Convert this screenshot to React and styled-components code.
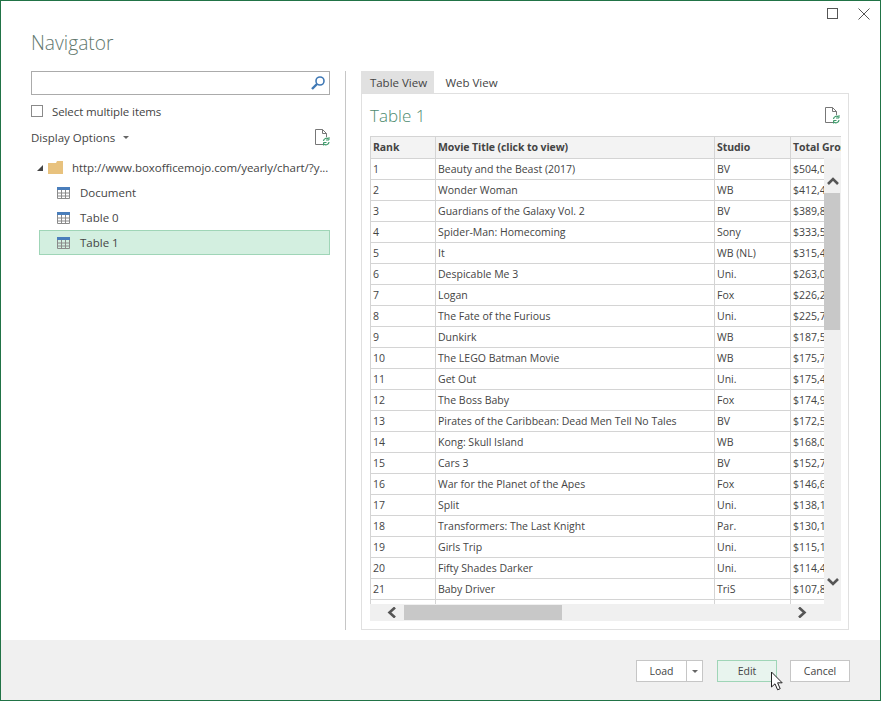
import React from "react";
import styled, { createGlobalStyle } from "styled-components";

const GlobalStyle = createGlobalStyle`
  html, body { margin: 0; padding: 0; background: #fff; }
  body { font-family: "Open Sans", "Noto Sans", sans-serif; color: #444; }
`;

const Window = styled.div`
  position: relative;
  box-sizing: border-box;
  width: 881px;
  height: 701px;
  border: 1px solid #217346;
  background: #fff;
  display: flex;
  flex-direction: column;
  overflow: hidden;
`;

const TitleBar = styled.div`
  height: 27px;
  display: flex;
  justify-content: flex-end;
  align-items: flex-start;
  padding: 7px 10px 0 0;
  gap: 20px;
  flex: none;
  box-sizing: border-box;
`;

const Heading = styled.h1`
  margin: 0;
  height: 43px;
  padding: 1px 0 0 30px;
  box-sizing: border-box;
  font-size: 19.2px;
  line-height: 28px;
  font-weight: 300;
  color: #62786e;
  flex: none;
`;

const Main = styled.div`
  flex: 1;
  display: flex;
  padding: 0 31px 10px 30px;
  min-height: 0;
`;

const LeftPane = styled.div`
  width: 299px;
  flex: none;
`;

const Divider = styled.div`
  width: 1px;
  background: #c6c6c6;
  margin: 0 15px 0 15px;
  flex: none;
`;

const RightPane = styled.div`
  flex: 1;
  display: flex;
  flex-direction: column;
  min-width: 0;
`;

const SearchBox = styled.div`
  box-sizing: border-box;
  height: 24px;
  border: 1px solid #ababab;
  display: flex;
  align-items: center;
  justify-content: flex-end;
  padding-right: 3px;
`;

const CheckRow = styled.label`
  display: flex;
  align-items: center;
  gap: 9px;
  height: 22px;
  margin-top: 5px;
  font-size: 11.5px;
  letter-spacing: -0.1px;
`;

const CheckBox = styled.span`
  box-sizing: border-box;
  width: 12px;
  height: 12px;
  border: 1px solid #8a8a8a;
  background: #fff;
`;

const OptionsRow = styled.div`
  display: flex;
  align-items: center;
  justify-content: space-between;
  height: 22px;
  margin-top: 4px;
  font-size: 11.5px;
`;

const OptionsLabel = styled.span`
  display: flex;
  align-items: center;
  gap: 8px;
`;

const Caret = styled.span`
  width: 0;
  height: 0;
  border-left: 3px solid transparent;
  border-right: 3px solid transparent;
  border-top: 3px solid #666;
`;

const Tree = styled.div`
  margin-top: 7px;
  display: flex;
  flex-direction: column;
`;

const RootNode = styled.div`
  height: 25px;
  display: flex;
  align-items: center;
  padding-left: 6px;
  font-size: 11.5px;
  letter-spacing: -0.05px;
  white-space: nowrap;
`;

const Arrow = styled.span`
  width: 0;
  height: 0;
  border-left: 6px solid transparent;
  border-bottom: 6px solid #444;
  margin-right: 5px;
  flex: none;
`;

const NodeLabel = styled.span`
  margin-left: 9px;
`;

const TreeItem = styled.div`
  box-sizing: border-box;
  height: 25px;
  margin-left: 8px;
  display: flex;
  align-items: center;
  gap: 10px;
  padding-left: ${(p) => (p.$selected ? "17px" : "18px")};
  font-size: 11.5px;
  background: ${(p) => (p.$selected ? "#d3efe0" : "transparent")};
  border: ${(p) => (p.$selected ? "1px solid #9fd5b7" : "none")};
`;

const Tabs = styled.div`
  display: flex;
  height: 22px;
  flex: none;
`;

const Tab = styled.div`
  box-sizing: border-box;
  width: ${(p) => p.$width}px;
  height: 22px;
  padding-left: ${(p) => (p.$active ? "2px" : "0")};
  display: flex;
  align-items: center;
  justify-content: center;
  font-size: 11.5px;
  background: ${(p) => (p.$active ? "#e1e1e1" : "transparent")};
`;

const Panel = styled.div`
  flex: 1;
  box-sizing: border-box;
  border: 1px solid #e0e0e0;
  padding: 0 7px 8px 8px;
  display: flex;
  flex-direction: column;
  min-height: 0;
`;

const PanelHead = styled.div`
  height: 42px;
  display: flex;
  align-items: center;
  justify-content: space-between;
  padding-right: 1px;
  flex: none;
`;

const PanelTitle = styled.div`
  font-size: 17px;
  font-weight: 300;
  color: #4d8a6e;
`;

const TableArea = styled.div`
  position: relative;
  flex: 1;
  overflow: hidden;
`;

const Grid = styled.table`
  border-collapse: collapse;
  table-layout: fixed;
  width: 471px;
  font-size: 10.5px;
  color: #444;
  th, td {
    box-sizing: border-box;
    border: 1px solid #d4d4d4;
    padding: 0 0 0 2px;
    text-align: left;
    white-space: nowrap;
    overflow: hidden;
  }
  td { height: 21px; }
  th {
    height: 22px;
    padding-bottom: 2px;
    background: #f3f3f3;
    font-weight: 700;
    letter-spacing: -0.08px;
  }
`;

const VScroll = styled.div`
  position: absolute;
  top: 22px;
  right: 0;
  width: 17px;
  bottom: 0;
  background: #f0f0f0;
`;

const VThumb = styled.div`
  position: absolute;
  top: 35px;
  left: 0;
  width: 16px;
  height: 137px;
  background: #c8c8c8;
`;

const HScroll = styled.div`
  position: absolute;
  left: 0;
  right: 0;
  bottom: 0;
  height: 17px;
  background: #f0f0f0;
`;

const HThumb = styled.div`
  position: absolute;
  left: 34px;
  top: 1px;
  height: 15px;
  width: 158px;
  background: #c8c8c8;
`;

const Chevron = styled.svg`
  position: absolute;
  left: ${(p) => p.$x}px;
  top: ${(p) => p.$y}px;
`;

const Footer = styled.div`
  height: 60px;
  flex: none;
  background: #f0f0f0;
  display: flex;
  justify-content: flex-end;
  align-items: flex-start;
  padding: 20px 30px 0 0;
  box-sizing: border-box;
  gap: 13px;
`;

const Button = styled.div`
  box-sizing: border-box;
  width: ${(p) => p.$width}px;
  height: 22px;
  border: 1px solid ${(p) => (p.$primary ? "#9fd5b7" : "#c6c6c6")};
  background: ${(p) => (p.$primary ? "#e8f4ee" : "#fff")};
  display: flex;
  align-items: center;
  justify-content: center;
  font-size: 10.5px;
`;

const SplitButton = styled.div`
  display: flex;
  margin-right: 1px;
`;

const SplitCaret = styled(Button)`
  margin-left: -1px;
`;

const Pointer = styled.svg`
  position: absolute;
  left: 769px;
  top: 670px;
`;

const RefreshDoc = () => (
  <svg width="16" height="17" viewBox="0 0 16 17">
    <path d="M9.5 15.5H1.5V.5H8.5L12.5 4.5V8" fill="none" stroke="#777" />
    <path d="M8.5.5V4.5H12.5" fill="none" stroke="#777" />
    <path d="M9.5 12a3 3 0 0 1 5-2M15 13a3 3 0 0 1-5 2" fill="none" stroke="#3f9a6b" strokeWidth="1.2" />
    <path d="M15 8v3h-3M9.5 16.5v-3h3" fill="none" stroke="#3f9a6b" />
  </svg>
);

const TableIcon = () => (
  <svg width="13" height="12" viewBox="0 0 13 12">
    <rect x="0" y="0" width="13" height="3" fill="#4a7ebb" />
    <path d="M.5 3v8.5h12V3M.5 6h12M.5 9h12M4.5 3v8.5M8.5 3v8.5" fill="none" stroke="#8a8a8a" />
  </svg>
);

const rows = [
  ["1", "Beauty and the Beast (2017)", "BV", "$504,0"],
  ["2", "Wonder Woman", "WB", "$412,4"],
  ["3", "Guardians of the Galaxy Vol. 2", "BV", "$389,8"],
  ["4", "Spider-Man: Homecoming", "Sony", "$333,5"],
  ["5", "It", "WB (NL)", "$315,4"],
  ["6", "Despicable Me 3", "Uni.", "$263,0"],
  ["7", "Logan", "Fox", "$226,2"],
  ["8", "The Fate of the Furious", "Uni.", "$225,7"],
  ["9", "Dunkirk", "WB", "$187,5"],
  ["10", "The LEGO Batman Movie", "WB", "$175,7"],
  ["11", "Get Out", "Uni.", "$175,4"],
  ["12", "The Boss Baby", "Fox", "$174,9"],
  ["13", "Pirates of the Caribbean: Dead Men Tell No Tales", "BV", "$172,5"],
  ["14", "Kong: Skull Island", "WB", "$168,0"],
  ["15", "Cars 3", "BV", "$152,7"],
  ["16", "War for the Planet of the Apes", "Fox", "$146,6"],
  ["17", "Split", "Uni.", "$138,1"],
  ["18", "Transformers: The Last Knight", "Par.", "$130,1"],
  ["19", "Girls Trip", "Uni.", "$115,1"],
  ["20", "Fifty Shades Darker", "Uni.", "$114,4"],
  ["21", "Baby Driver", "TriS", "$107,8"],
  ["", "", "", ""],
];

export default function App() {
  return (
    <>
      <GlobalStyle />
      <Window>
        <TitleBar>
          <svg width="11" height="11" viewBox="0 0 11 11">
            <rect x=".5" y=".5" width="10" height="10" fill="none" stroke="#555" />
          </svg>
          <svg width="12" height="12" viewBox="0 0 12 12">
            <path d="M.5.5l11 11M11.5.5l-11 11" stroke="#555" fill="none" />
          </svg>
        </TitleBar>
        <Heading>Navigator</Heading>
        <Main>
          <LeftPane>
            <SearchBox>
              <svg width="16" height="16" viewBox="0 0 16 16">
                <circle cx="10" cy="6" r="4" fill="none" stroke="#3f78b5" strokeWidth="1.6" />
                <path d="M7 9l-5 5" stroke="#3f78b5" strokeWidth="2.4" />
              </svg>
            </SearchBox>
            <CheckRow>
              <CheckBox />
              Select multiple items
            </CheckRow>
            <OptionsRow>
              <OptionsLabel>
                Display Options
                <Caret />
              </OptionsLabel>
              <RefreshDoc />
            </OptionsRow>
            <Tree>
              <RootNode>
                <Arrow />
                <svg width="15" height="13" viewBox="0 0 15 13">
                  <path d="M0 2h8l1-2h6v13H0z" fill="#e8c27e" />
                </svg>
                <NodeLabel>http://www.boxofficemojo.com/yearly/chart/?y...</NodeLabel>
              </RootNode>
              <TreeItem>
                <TableIcon />
                Document
              </TreeItem>
              <TreeItem>
                <TableIcon />
                Table 0
              </TreeItem>
              <TreeItem $selected>
                <TableIcon />
                Table 1
              </TreeItem>
            </Tree>
          </LeftPane>
          <Divider />
          <RightPane>
            <Tabs>
              <Tab $active $width={73}>Table View</Tab>
              <Tab $width={75}>Web View</Tab>
            </Tabs>
            <Panel>
              <PanelHead>
                <PanelTitle>Table 1</PanelTitle>
                <RefreshDoc />
              </PanelHead>
              <TableArea>
                <Grid>
                  <colgroup>
                    <col width="65" />
                    <col width="279" />
                    <col width="76" />
                    <col width="51" />
                  </colgroup>
                  <thead>
                    <tr>
                      <th>Rank</th>
                      <th>Movie Title (click to view)</th>
                      <th>Studio</th>
                      <th>Total Gross</th>
                    </tr>
                  </thead>
                  <tbody>
                    {rows.map((r, i) => (
                      <tr key={i}>
                        {r.map((c, j) => (
                          <td key={j}>{c}</td>
                        ))}
                      </tr>
                    ))}
                  </tbody>
                </Grid>
                <VScroll>
                  <Chevron $x={3} $y={19} width="12" height="8" viewBox="0 0 12 8">
                    <path d="M1 7l5-5 5 5" fill="none" stroke="#555" strokeWidth="2.6" />
                  </Chevron>
                  <VThumb />
                  <Chevron $x={3} $y={420} width="12" height="8" viewBox="0 0 12 8">
                    <path d="M1 1l5 5 5-5" fill="none" stroke="#555" strokeWidth="2.6" />
                  </Chevron>
                </VScroll>
                <HScroll>
                  <Chevron $x={17} $y={3} width="9" height="11" viewBox="0 0 9 11">
                    <path d="M8 .5L2.5 5.5 8 10.5" fill="none" stroke="#555" strokeWidth="2.6" />
                  </Chevron>
                  <HThumb />
                  <Chevron $x={428} $y={3} width="9" height="11" viewBox="0 0 9 11">
                    <path d="M1 .5L6.5 5.5 1 10.5" fill="none" stroke="#555" strokeWidth="2.6" />
                  </Chevron>
                </HScroll>
              </TableArea>
            </Panel>
          </RightPane>
        </Main>
        <Footer>
          <SplitButton>
            <Button $width={51}>Load</Button>
            <SplitCaret $width={17}>
              <Caret />
            </SplitCaret>
          </SplitButton>
          <Button $primary $width={60}>Edit</Button>
          <Button $width={60}>Cancel</Button>
        </Footer>
        <Pointer width="14" height="21" viewBox="0 0 14 21">
          <path d="M1.5 1v15l3.5-3.2 2.6 6 2.6-1.1-2.6-5.9h4.6z" fill="#fff" stroke="#222" />
        </Pointer>
      </Window>
    </>
  );
}
